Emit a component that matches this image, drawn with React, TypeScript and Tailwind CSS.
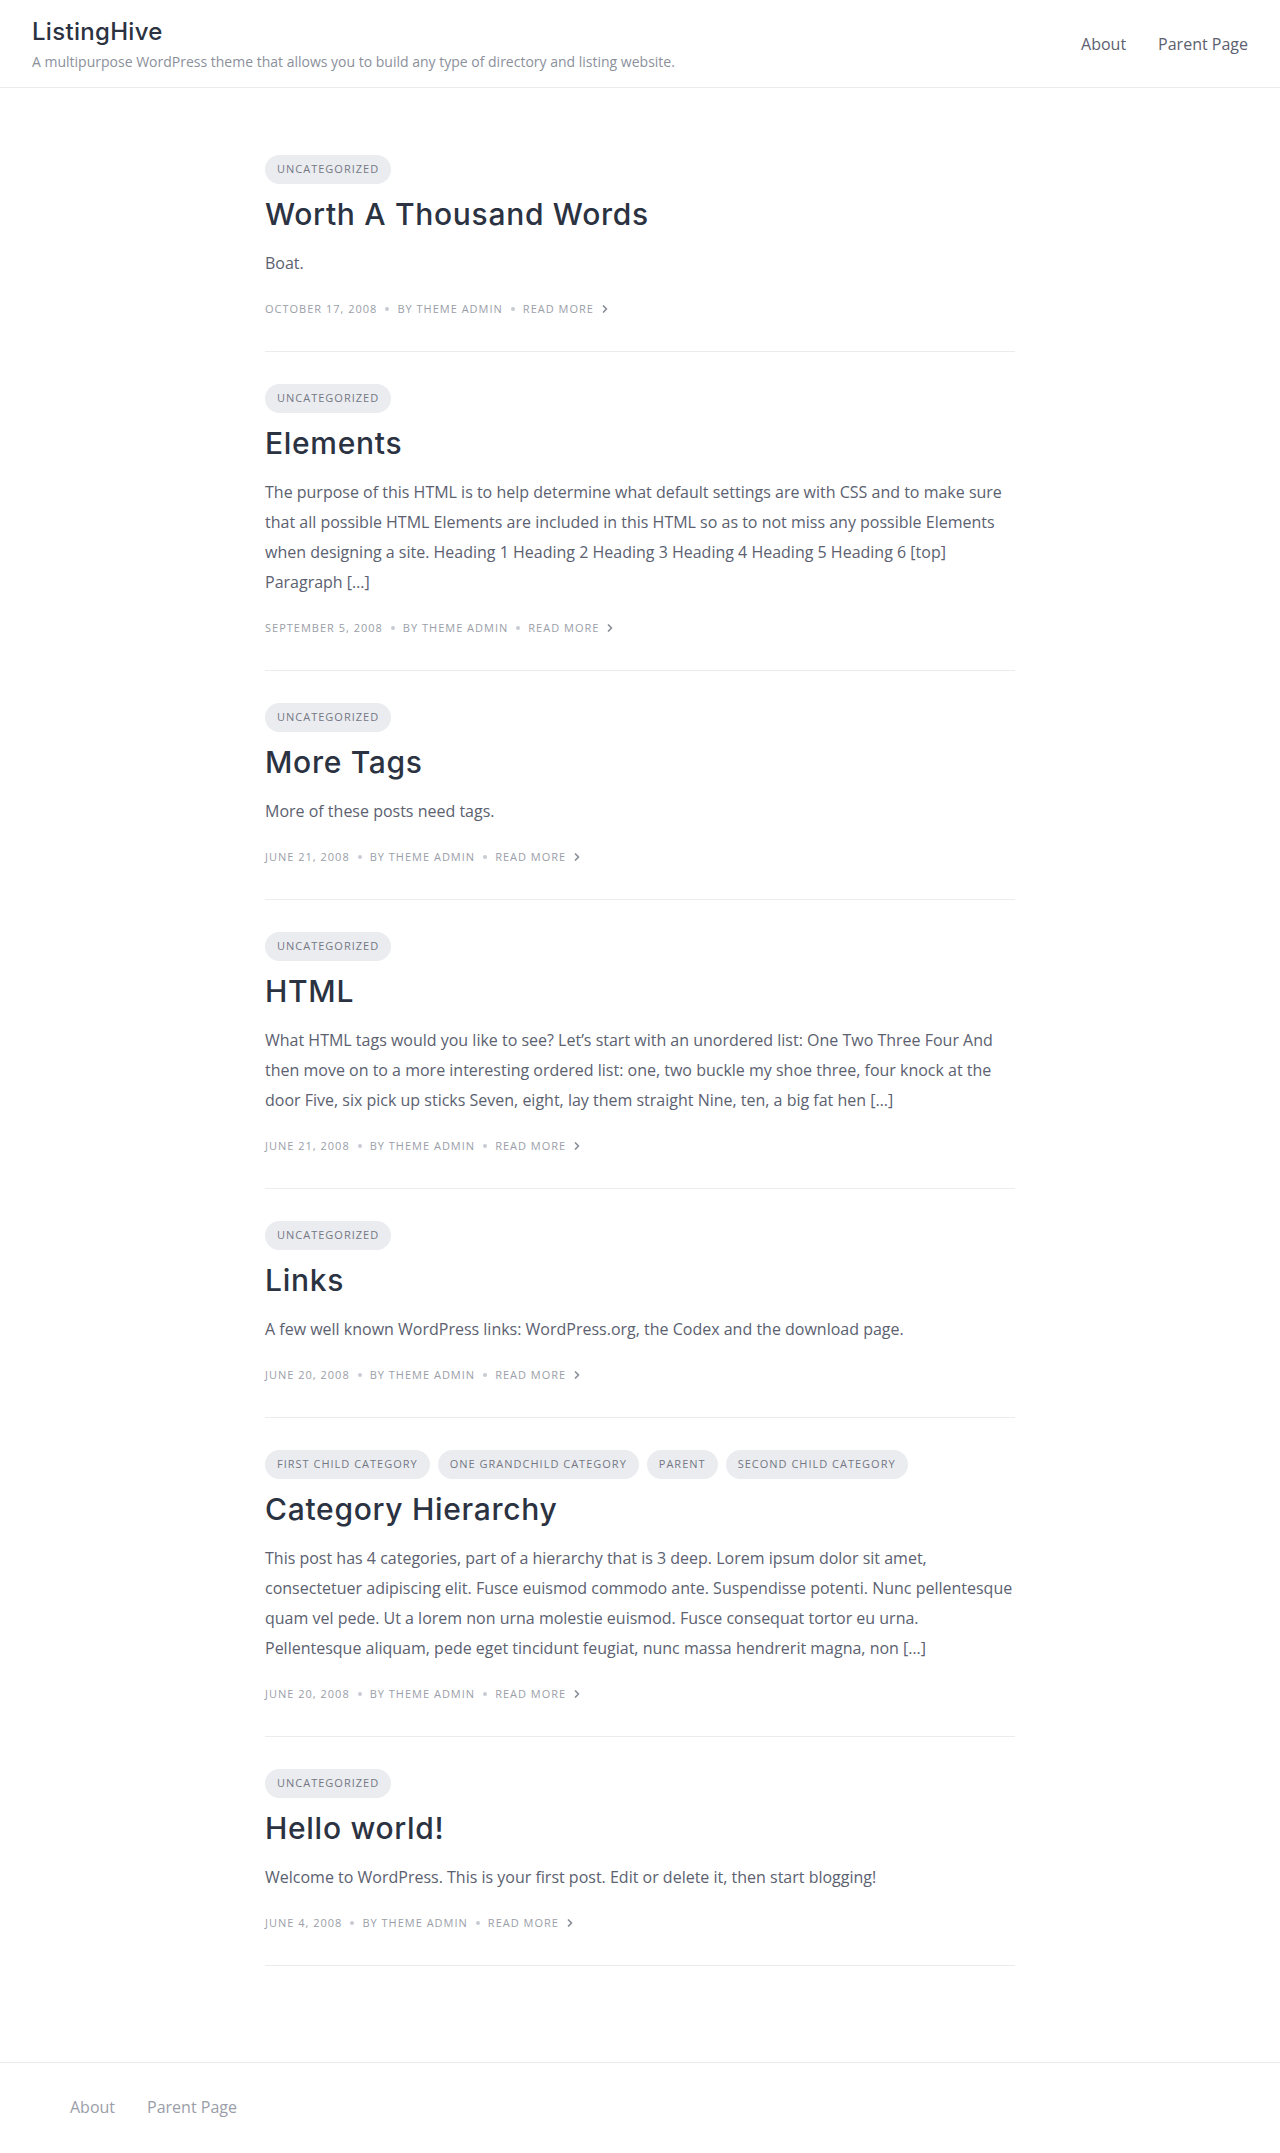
import { ChevronRight } from "lucide-react";

interface Post {
  cats: string[];
  title: string;
  excerpt: string;
  date: string;
}

const posts: Post[] = [
  {
    cats: ["Uncategorized"],
    title: "Worth A Thousand Words",
    excerpt: "Boat.",
    date: "October 17, 2008",
  },
  {
    cats: ["Uncategorized"],
    title: "Elements",
    excerpt:
      "The purpose of this HTML is to help determine what default settings are with CSS and to make sure that all possible HTML Elements are included in this HTML so as to not miss any possible Elements when designing a site. Heading 1 Heading 2 Heading 3 Heading 4 Heading 5 Heading 6 [top] Paragraph […]",
    date: "September 5, 2008",
  },
  {
    cats: ["Uncategorized"],
    title: "More Tags",
    excerpt: "More of these posts need tags.",
    date: "June 21, 2008",
  },
  {
    cats: ["Uncategorized"],
    title: "HTML",
    excerpt:
      "What HTML tags would you like to see? Let’s start with an unordered list: One Two Three Four And then move on to a more interesting ordered list: one, two buckle my shoe three, four knock at the door Five, six pick up sticks Seven, eight, lay them straight Nine, ten, a big fat hen […]",
    date: "June 21, 2008",
  },
  {
    cats: ["Uncategorized"],
    title: "Links",
    excerpt:
      "A few well known WordPress links: WordPress.org, the Codex and the download page.",
    date: "June 20, 2008",
  },
  {
    cats: [
      "First Child Category",
      "One Grandchild Category",
      "Parent",
      "Second Child Category",
    ],
    title: "Category Hierarchy",
    excerpt:
      "This post has 4 categories, part of a hierarchy that is 3 deep. Lorem ipsum dolor sit amet, consectetuer adipiscing elit. Fusce euismod commodo ante. Suspendisse potenti. Nunc pellentesque quam vel pede. Ut a lorem non urna molestie euismod. Fusce consequat tortor eu urna. Pellentesque aliquam, pede eget tincidunt feugiat, nunc massa hendrerit magna, non […]",
    date: "June 20, 2008",
  },
  {
    cats: ["Uncategorized"],
    title: "Hello world!",
    excerpt:
      "Welcome to WordPress. This is your first post. Edit or delete it, then start blogging!",
    date: "June 4, 2008",
  },
];

function Dot() {
  return <span className="mx-[8px] inline-block h-[4px] w-[4px] rounded-full bg-[#c8cbd2]" />;
}

function PostItem({ post }: { post: Post }) {
  return (
    <article className="border-b border-[#ececef] pt-8 pb-8">
      <div className="flex flex-wrap gap-2">
        {post.cats.map((c) => (
          <span
            key={c}
            className="flex h-[29px] items-center rounded-full bg-[#ebecf0] px-3 text-[11px] uppercase tracking-[1px] text-[#737884]"
          >
            {c}
          </span>
        ))}
      </div>
      <h2 className="mt-[10px] font-['Inter',sans-serif] text-[30px] font-medium leading-[40px] tracking-[0.7px] text-[#2b3241]">
        {post.title}
      </h2>
      <p className="mt-[14px] text-base leading-[30px] text-[#5b6170]">{post.excerpt}</p>
      <div className="mt-[21px] flex items-center text-[11px] uppercase leading-5 tracking-[1px] text-[#9a9ea8]">
        <span>{post.date}</span>
        <Dot />
        <span>By Theme Admin</span>
        <Dot />
        <span className="flex items-center">
          Read More
          <ChevronRight className="ml-[5px] text-[#8a8e99]" size={12} strokeWidth={3.5} />
        </span>
      </div>
    </article>
  );
}

export default function App() {
  return (
    <div className="min-h-screen bg-white font-['Open_Sans',sans-serif]">
      <header className="flex h-[88px] items-center justify-between border-b border-[#ececef] px-8">
        <div>
          <div className="font-['Inter',sans-serif] text-[24px] font-medium leading-8 tracking-[0.3px] text-[#2b3241]">
            ListingHive
          </div>
          <div className="mt-[4px] text-[14px] leading-5 text-[#8b909b]">
            A multipurpose WordPress theme that allows you to build any type of directory and listing website.
          </div>
        </div>
        <nav className="flex gap-8 text-base text-[#5b6170]">
          <a href="#">About</a>
          <a href="#">Parent Page</a>
        </nav>
      </header>

      <main className="mx-auto w-[750px] pt-[35px] pb-24">
        {posts.map((p) => (
          <PostItem key={p.title} post={p} />
        ))}
      </main>

      <footer className="flex h-[89px] items-center gap-8 border-t border-[#ececef] pl-[70px] text-base text-[#9a9ea8]">
        <a href="#">About</a>
        <a href="#">Parent Page</a>
      </footer>
    </div>
  );
}
